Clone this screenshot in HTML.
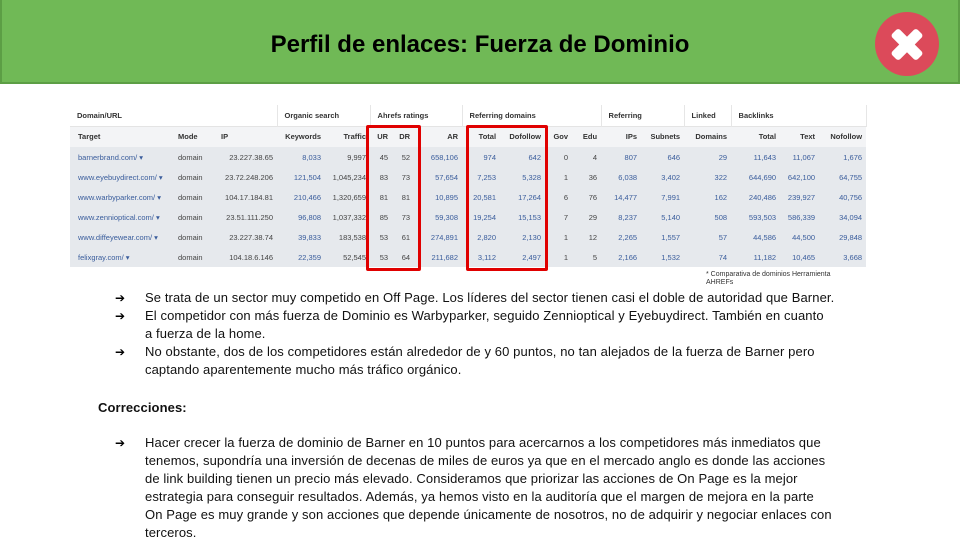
<!DOCTYPE html>
<html><head><meta charset="utf-8"><style>
*{margin:0;padding:0;box-sizing:border-box}
body{width:960px;height:540px;overflow:hidden;background:#fff;font-family:"Liberation Sans",Arial,sans-serif;position:relative}
.bar{position:absolute;left:0;top:0;width:960px;height:84px;background:#70b956;border:2px solid #5c9e45;border-top:none}
.title{position:absolute;left:0;top:31px;width:960px;text-align:center;font-size:24px;font-weight:bold;color:#000}
.x{position:absolute;left:875px;top:12px;width:64px;height:64px;border-radius:50%;background:#dc4a5a}
.x:before,.x:after{content:"";position:absolute;left:14px;top:27px;width:36px;height:11px;background:#fff;border-radius:3px;transform:rotate(45deg)}
.x:after{transform:rotate(-45deg)}
table{position:absolute;left:70px;top:105px;border-collapse:collapse;table-layout:fixed;width:796px;font-size:7.5px;color:#444}
td{padding:0 4px 0 0;text-align:right;white-space:nowrap;overflow:hidden}
tr.g td{height:21px;background:#fff;font-weight:bold;text-align:left;padding-left:7px;color:#333;border-right:1px solid #e6e6e6}
tr.h td{height:21px;background:#f3f4f6;font-weight:bold;color:#333;border-top:1px solid #e4e4e4}
tr.d td{height:20px;background:#e6e9ed}
tr.h td:first-child,tr.d td:first-child{text-align:left;padding-left:8px}
.b{color:#3a5d9c}
.rb{position:absolute;border:3px solid #e00000;border-radius:2px}
.note{position:absolute;left:706px;top:271px;font-size:7px;color:#333;line-height:8px;width:130px}
.t{position:absolute;font-size:13px;letter-spacing:0.1px;color:#111;white-space:nowrap}
.ar{position:absolute;font-size:12px;left:115px}
</style></head><body>
<div class="bar"></div>
<div class="title">Perfil de enlaces: Fuerza de Dominio</div>
<div class="x"></div>
<table>
<colgroup><col style="width:108px"><col style="width:37px"><col style="width:62px"><col style="width:48px"><col style="width:45px"><col style="width:22px"><col style="width:22px"><col style="width:48px"><col style="width:38px"><col style="width:45px"><col style="width:27px"><col style="width:29px"><col style="width:40px"><col style="width:43px"><col style="width:47px"><col style="width:49px"><col style="width:39px"><col style="width:47px"></colgroup>
<tr class="g"><td colspan="3">Domain/URL</td><td colspan="2">Organic search</td><td colspan="3">Ahrefs ratings</td><td colspan="4">Referring domains</td><td colspan="2">Referring</td><td>Linked</td><td colspan="3">Backlinks</td></tr>
<tr class="h"><td>Target</td><td style="text-align:left">Mode</td><td style="text-align:left;padding-left:6px">IP</td><td>Keywords</td><td>Traffic</td><td>UR</td><td>DR</td><td>AR</td><td>Total</td><td>Dofollow</td><td>Gov</td><td>Edu</td><td>IPs</td><td>Subnets</td><td>Domains</td><td>Total</td><td>Text</td><td>Nofollow</td></tr>
<tr class="d"><td class="b">barnerbrand.com/ ▾</td><td style="text-align:left">domain</td><td>23.227.38.65</td><td class="b">8,033</td><td>9,997</td><td>45</td><td>52</td><td class="b">658,106</td><td class="b">974</td><td class="b">642</td><td>0</td><td>4</td><td class="b">807</td><td class="b">646</td><td class="b">29</td><td class="b">11,643</td><td class="b">11,067</td><td class="b">1,676</td></tr>
<tr class="d"><td class="b">www.eyebuydirect.com/ ▾</td><td style="text-align:left">domain</td><td>23.72.248.206</td><td class="b">121,504</td><td>1,045,234</td><td>83</td><td>73</td><td class="b">57,654</td><td class="b">7,253</td><td class="b">5,328</td><td>1</td><td>36</td><td class="b">6,038</td><td class="b">3,402</td><td class="b">322</td><td class="b">644,690</td><td class="b">642,100</td><td class="b">64,755</td></tr>
<tr class="d"><td class="b">www.warbyparker.com/ ▾</td><td style="text-align:left">domain</td><td>104.17.184.81</td><td class="b">210,466</td><td>1,320,659</td><td>81</td><td>81</td><td class="b">10,895</td><td class="b">20,581</td><td class="b">17,264</td><td>6</td><td>76</td><td class="b">14,477</td><td class="b">7,991</td><td class="b">162</td><td class="b">240,486</td><td class="b">239,927</td><td class="b">40,756</td></tr>
<tr class="d"><td class="b">www.zennioptical.com/ ▾</td><td style="text-align:left">domain</td><td>23.51.111.250</td><td class="b">96,808</td><td>1,037,332</td><td>85</td><td>73</td><td class="b">59,308</td><td class="b">19,254</td><td class="b">15,153</td><td>7</td><td>29</td><td class="b">8,237</td><td class="b">5,140</td><td class="b">508</td><td class="b">593,503</td><td class="b">586,339</td><td class="b">34,094</td></tr>
<tr class="d"><td class="b">www.diffeyewear.com/ ▾</td><td style="text-align:left">domain</td><td>23.227.38.74</td><td class="b">39,833</td><td>183,538</td><td>53</td><td>61</td><td class="b">274,891</td><td class="b">2,820</td><td class="b">2,130</td><td>1</td><td>12</td><td class="b">2,265</td><td class="b">1,557</td><td class="b">57</td><td class="b">44,586</td><td class="b">44,500</td><td class="b">29,848</td></tr>
<tr class="d"><td class="b">felixgray.com/ ▾</td><td style="text-align:left">domain</td><td>104.18.6.146</td><td class="b">22,359</td><td>52,545</td><td>53</td><td>64</td><td class="b">211,682</td><td class="b">3,112</td><td class="b">2,497</td><td>1</td><td>5</td><td class="b">2,166</td><td class="b">1,532</td><td class="b">74</td><td class="b">11,182</td><td class="b">10,465</td><td class="b">3,668</td></tr>
</table>
<div class="rb" style="left:366px;top:125px;width:55px;height:146px"></div>
<div class="rb" style="left:466px;top:125px;width:82px;height:146px"></div>
<div class="note">* Comparativa de dominios Herramienta AHREFs</div>

<div class="ar" style="top:291px">➔</div><div class="t" style="left:145px;top:290px">Se trata de un sector muy competido en Off Page. Los líderes del sector tienen casi el doble de autoridad que Barner.</div>
<div class="ar" style="top:309px">➔</div><div class="t" style="left:145px;top:308px">El competidor con más fuerza de Dominio es Warbyparker, seguido Zennioptical y Eyebuydirect. También en cuanto</div>
<div class="t" style="left:145px;top:326px">a fuerza de la home.</div>
<div class="ar" style="top:345px">➔</div><div class="t" style="left:145px;top:344px">No obstante, dos de los competidores están alrededor de y 60 puntos, no tan alejados de la fuerza de Barner pero</div>
<div class="t" style="left:145px;top:362px">captando aparentemente mucho más tráfico orgánico.</div>
<div class="t" style="left:98px;top:400px;font-weight:bold">Correcciones:</div>
<div class="ar" style="top:436px">➔</div><div class="t" style="left:145px;top:435px">Hacer crecer la fuerza de dominio de Barner en 10 puntos para acercarnos a los competidores más inmediatos que</div>
<div class="t" style="left:145px;top:453px">tenemos, supondría una inversión de decenas de miles de euros ya que en el mercado anglo es donde las acciones</div>
<div class="t" style="left:145px;top:471px">de link building tienen un precio más elevado. Consideramos que  priorizar las acciones de On Page es la mejor</div>
<div class="t" style="left:145px;top:489px">estrategia para conseguir resultados.  Además, ya hemos visto en la auditoría que el margen de mejora en la parte</div>
<div class="t" style="left:145px;top:507px">On Page es muy grande y son acciones que depende únicamente de nosotros, no de adquirir y negociar enlaces con</div>
<div class="t" style="left:145px;top:525px">terceros.</div>
</body></html>
